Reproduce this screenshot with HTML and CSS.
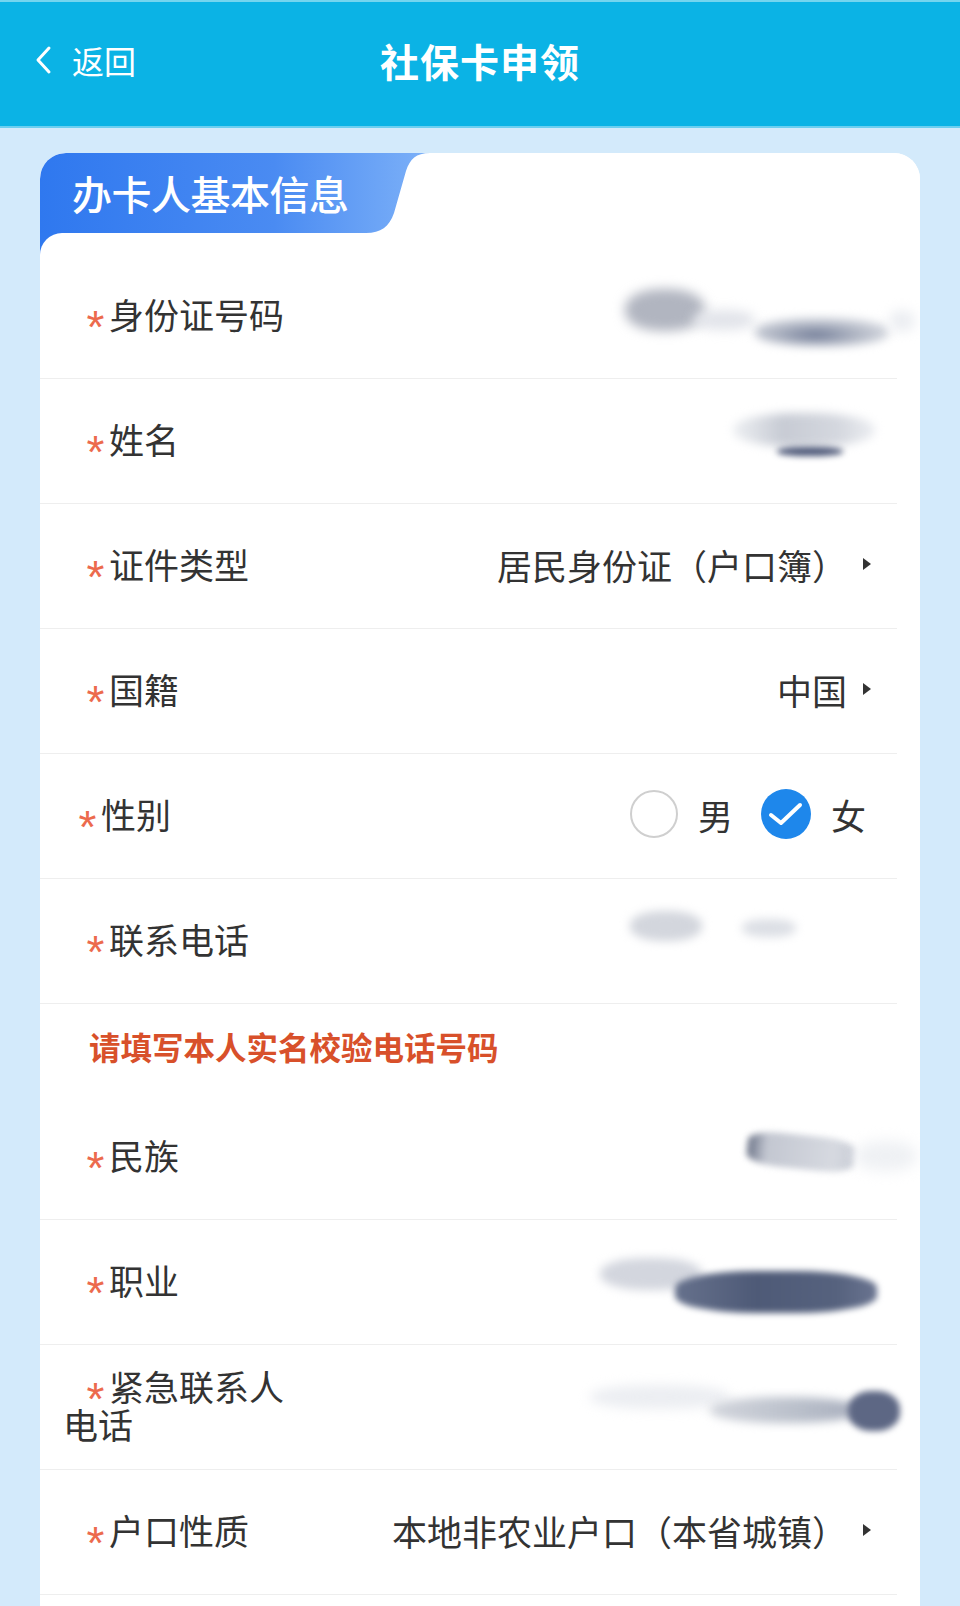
FILE: index.html
```html
<!DOCTYPE html>
<html lang="zh-CN">
<head>
<meta charset="utf-8">
<title>社保卡申领</title>
<link rel="stylesheet" href="styles.css">
</head>
<body>
<header class="topbar">
  <div class="back">
    <svg class="back-icon" viewBox="0 0 20 30" width="20" height="30"><path d="M16 3 L5 15 L16 27"/></svg>
    <span>返回</span>
  </div>
  <h1 class="title">社保卡申领</h1>
  <div class="spacer"></div>
</header>
<main class="page">
  <section class="card">
    <div class="card-head"><div class="tab">办卡人基本信息</div></div>
    <div class="card-body">
      <div class="row">
        <div class="label"><span class="req">*</span>身份证号码</div>
        <div class="value">
          <div class="smudge sm-id"><i class="blob id-a"></i><i class="blob id-b"></i><i class="blob id-c"></i><i class="blob id-d"></i></div>
        </div>
      </div>
      <div class="row">
        <div class="label"><span class="req">*</span>姓名</div>
        <div class="value">
          <div class="smudge sm-nm"><i class="blob nm-a"></i><i class="blob nm-b"></i></div>
        </div>
      </div>
      <div class="row">
        <div class="label"><span class="req">*</span>证件类型</div>
        <div class="value"><span>居民身份证（户口簿）</span><i class="caret"></i></div>
      </div>
      <div class="row">
        <div class="label"><span class="req">*</span>国籍</div>
        <div class="value"><span>中国</span><i class="caret"></i></div>
      </div>
      <div class="row">
        <div class="label label-tight"><span class="req">*</span>性别</div>
        <div class="radios">
          <span class="radio"></span><span class="radio-text">男</span>
          <span class="radio checked"><svg viewBox="0 0 50 50" width="50" height="50"><path d="M10 26 L20 34 L39 16"/></svg></span><span class="radio-text last">女</span>
        </div>
      </div>
      <div class="row">
        <div class="label"><span class="req">*</span>联系电话</div>
        <div class="value">
          <div class="smudge sm-tel"><i class="blob tel-a"></i><i class="blob tel-b"></i></div>
        </div>
      </div>
      <div class="hint">请填写本人实名校验电话号码</div>
      <div class="row">
        <div class="label"><span class="req">*</span>民族</div>
        <div class="value">
          <div class="smudge sm-mz"><i class="blob mz-a"></i><i class="blob mz-b"></i></div>
        </div>
      </div>
      <div class="row">
        <div class="label"><span class="req">*</span>职业</div>
        <div class="value">
          <div class="smudge sm-zy"><i class="blob zy-a"></i><i class="blob zy-b"></i></div>
        </div>
      </div>
      <div class="row">
        <div class="label"><span class="req">*</span>紧急联系人电话</div>
        <div class="value">
          <div class="smudge sm-jj"><i class="blob jj-a"></i><i class="blob jj-b"></i><i class="blob jj-c"></i></div>
        </div>
      </div>
      <div class="row">
        <div class="label"><span class="req">*</span>户口性质</div>
        <div class="value"><span>本地非农业户口（本省城镇）</span><i class="caret"></i></div>
      </div>
      <div class="row"></div>
    </div>
  </section>
</main>
</body>
</html>
```

FILE: styles.css
```css
* { box-sizing: border-box; }

html, body {
  margin: 0;
  padding: 0;
}

body {
  width: 960px;
  min-height: 1606px;
  background: #d3eafb;
  font-family: "Noto Sans CJK SC", "Noto Sans", sans-serif;
  color: #333;
  overflow: hidden;
}

/* ---------- top bar ---------- */
.topbar {
  height: 128px;
  background: #0bb3e5;
  border-top: 2px solid #74d5ef;
  border-bottom: 2px solid #6ccff0;
  display: grid;
  grid-template-columns: 1fr auto 1fr;
  align-items: center;
  padding-bottom: 8px;
  color: #fff;
}

.back {
  display: flex;
  align-items: center;
  padding-left: 33px;
  font-size: 32px;
  gap: 19px;
  line-height: 1;
}

.back-icon path {
  fill: none;
  stroke: #fff;
  stroke-width: 3;
  stroke-linecap: round;
  stroke-linejoin: round;
}

.title {
  margin: 0;
  font-size: 39px;
  font-weight: 700;
  letter-spacing: 1px;
  line-height: 1;
}

/* ---------- card ---------- */
.page {
  padding: 25px 40px 0;
}

.card {
  border-radius: 26px 26px 0 0;
  overflow: hidden;
  background: linear-gradient(#3079ef, #3079ef) 0 80px / 30px 30px no-repeat, #fff;
}

.card-head {
  height: 80px;
  background: #fff;
}

.tab {
  width: 390px;
  height: 80px;
  padding-left: 32px;
  display: flex;
  align-items: center;
  color: #fff;
  font-size: 40px;
  font-weight: 500;
  letter-spacing: -0.5px;
  background: linear-gradient(90deg, #2f78ef 0%, #4a8bf2 60%, #7db1f8 100%);
  clip-path: path("M0 80 L0 26 Q0 0 26 0 L390 0 C376 0 370 6 366 18 L354 60 C349 74 341 80 326 80 Z");
}

.card-body {
  background: #fff;
  border-top-left-radius: 22px;
  padding-top: 21px;
  padding-bottom: 40px;
}

.row {
  height: 125px;
  margin-right: 23px;
  padding-bottom: 4px;
  border-bottom: 1.5px solid #eeeeee;
  display: flex;
  align-items: center;
  justify-content: space-between;
}

.label {
  flex: none;
  width: 263px;
  padding-left: 23px;
  font-size: 35px;
  line-height: 38px;
  text-indent: 19px;
  color: #333;
}

.label-tight { text-indent: 11px; }

.req {
  display: inline-block;
  width: 27px;
  text-indent: 0;
  text-align: center;
  font-family: "Liberation Sans", sans-serif;
  font-size: 46px;
  line-height: 10px;
  vertical-align: -14px;
  color: #ec6a4d;
}

.value {
  display: flex;
  align-items: center;
  padding-right: 26px;
  font-size: 35px;
  color: #333;
  white-space: nowrap;
}

.caret {
  display: inline-block;
  width: 0;
  height: 0;
  margin-left: 16px;
  border-left: 8px solid #333;
  border-top: 6px solid transparent;
  border-bottom: 6px solid transparent;
}

/* ---------- radios ---------- */
.radios {
  display: flex;
  align-items: center;
  padding-right: 31px;
  font-size: 35px;
  color: #333;
}

.radio {
  width: 48px;
  height: 48px;
  border-radius: 50%;
  border: 2px solid #cfcfcf;
  margin-right: 20px;
}

.radio.checked {
  width: 50px;
  height: 50px;
  border: none;
  background: #1e87eb;
  display: flex;
}

.radio.checked path {
  fill: none;
  stroke: #fff;
  stroke-width: 4;
  stroke-linecap: round;
  stroke-linejoin: round;
}

.radio-text { margin-right: 28px; }
.radio-text.last { margin-right: 0; }

/* ---------- hint ---------- */
.hint {
  height: 91px;
  padding-left: 49px;
  padding-bottom: 7px;
  display: flex;
  align-items: center;
  font-size: 31.5px;
  font-weight: 700;
  color: #d8502a;
}

/* ---------- redaction smudges ---------- */
.smudge {
  display: flex;
  align-items: flex-start;
  height: 60px;
}

.blob {
  display: block;
  flex: none;
  border-radius: 45%;
  filter: blur(4px);
}

.sm-id { width: 296px; margin-right: -42px; }
.id-a { margin-left: 8px; width: 80px; height: 42px; margin-top: 5px; background: #b1b5c0; filter: blur(6px); }
.id-b { margin-left: -12px; width: 62px; height: 20px; margin-top: 26px; background: #e2e4ea; filter: blur(6px); }
.id-c { width: 134px; height: 28px; margin-top: 34px; background: radial-gradient(ellipse at 45% 60%, #6f7a96 0%, #aeb4c2 40%, #dde0e6 80%); filter: blur(5px); }
.id-d { width: 26px; height: 22px; margin-top: 26px; background: #eceef2; filter: blur(6px); }

.sm-nm { width: 142px; margin-right: -4px; }
.nm-a { width: 142px; height: 34px; margin-top: 4px; background: linear-gradient(90deg, #eef0f3, #c7cbd4 35%, #d5d8df 75%, #eceef2); filter: blur(5px); }
.nm-b { margin-left: -98px; width: 66px; height: 9px; margin-top: 38px; background: #4c5777; filter: blur(3px); }

.sm-tel { width: 165px; margin-right: 76px; }
.tel-a { width: 72px; height: 30px; margin-top: 2px; background: #d3d6dd; filter: blur(5px); }
.tel-b { margin-left: 40px; width: 54px; height: 18px; margin-top: 10px; background: #dcdfe5; filter: blur(5px); }

.sm-mz { width: 173px; margin-right: -49px; }
.mz-a { width: 108px; height: 34px; margin-top: 10px; border-radius: 30%; background: linear-gradient(90deg, #6a7286, #c3c7d1 18%, #d6d9e0 80%, #c9cdd6); transform: rotate(6deg); filter: blur(3px); }
.mz-b { width: 62px; height: 30px; margin-top: 16px; background: #eff1f4; filter: blur(7px); }

.sm-zy { width: 277px; margin-right: -6px; }
.zy-a { width: 102px; height: 32px; margin-top: 8px; background: #d3d6de; filter: blur(5px); }
.zy-b { margin-left: -27px; width: 202px; height: 42px; margin-top: 21px; border-radius: 40%; background: linear-gradient(90deg, #66718c, #4e5a77 40%, #56627e 80%, #6a7490); filter: blur(3px); }

.sm-jj { width: 320px; margin-right: -39px; }
.jj-a { width: 140px; height: 24px; margin-top: 10px; background: #eceef2; filter: blur(6px); }
.jj-b { margin-left: -20px; width: 150px; height: 26px; margin-top: 22px; background: linear-gradient(90deg, #d2d5dc, #b9bfca 60%, #a9afbe); filter: blur(5px); }
.jj-c { margin-left: -12px; width: 52px; height: 40px; margin-top: 16px; background: #5d6784; filter: blur(3px); }
```
